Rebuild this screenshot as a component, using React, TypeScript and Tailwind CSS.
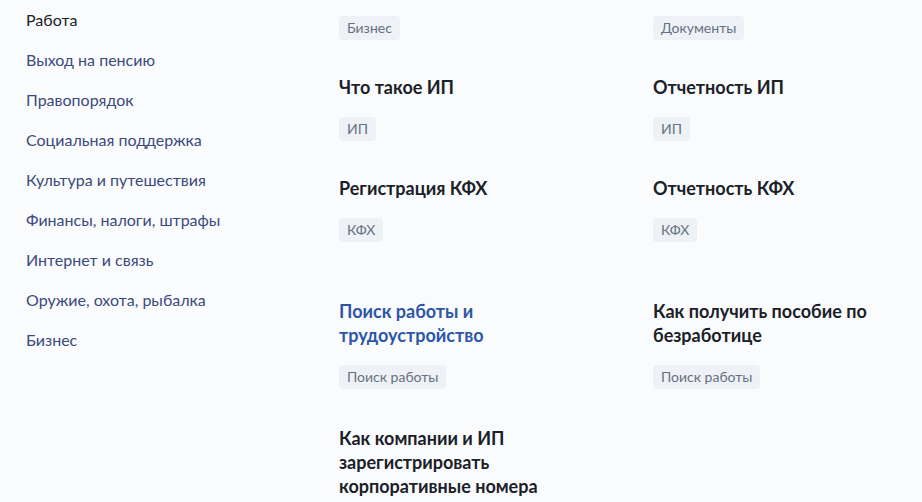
const sidebar = [
  "Работа",
  "Выход на пенсию",
  "Правопорядок",
  "Социальная поддержка",
  "Культура и путешествия",
  "Финансы, налоги, штрафы",
  "Интернет и связь",
  "Оружие, охота, рыбалка",
  "Бизнес",
];

type Card = { title?: string; tag: string; active?: boolean };

function Tag({ label }: { label: string }) {
  return (
    <span className="inline-flex h-6 items-center self-start rounded bg-[#eef1f6] px-2 text-[14px] leading-none text-[#66727f]">
      {label}
    </span>
  );
}

function CardItem({ card }: { card: Card }) {
  return (
    <div className="flex flex-col">
      {card.title && (
        <h3
          className={
            card.active
              ? "mb-[18px] max-w-[250px] text-[18px] font-bold leading-6 text-[#2c56a6]"
              : "mb-[18px] max-w-[250px] text-[18px] font-bold leading-6 text-[#1b2128]"
          }
        >
          {card.title}
        </h3>
      )}
      <Tag label={card.tag} />
    </div>
  );
}

const rows: Card[][] = [
  [{ tag: "Бизнес" }, { tag: "Документы" }],
  [
    { title: "Что такое ИП", tag: "ИП" },
    { title: "Отчетность ИП", tag: "ИП" },
  ],
  [
    { title: "Регистрация КФХ", tag: "КФХ" },
    { title: "Отчетность КФХ", tag: "КФХ" },
  ],
  [
    { title: "Поиск работы и трудоустройство", tag: "Поиск работы", active: true },
    { title: "Как получить пособие по безработице", tag: "Поиск работы" },
  ],
];

export default function App() {
  return (
    <div className="flex h-[502px] w-[922px] overflow-hidden bg-[#fafbfd] font-['Lato','Noto_Sans',sans-serif]">
      {/* Left menu */}
      <aside className="w-[339px] shrink-0 pl-[26px] pt-2">
        <ul className="flex flex-col gap-4">
          {sidebar.map((item, i) => (
            <li
              key={item}
              className={
                i === 0
                  ? "text-[16px] leading-6 text-[#1b2128]"
                  : "text-[16px] leading-6 text-[#3b4a7c]"
              }
            >
              {item}
            </li>
          ))}
        </ul>
      </aside>

      {/* Cards */}
      <main className="flex-1 pt-4">
        <div className="flex flex-col">
          {rows.map((row, ri) => (
            <div
              key={ri}
              className={
                ri === 0
                  ? "grid grid-cols-[314px_1fr]"
                  : ri === 3
                  ? "mt-[57px] grid grid-cols-[314px_1fr]"
                  : "mt-[35px] grid grid-cols-[314px_1fr]"
              }
            >
              {row.map((card) => (
                <div key={card.title ?? card.tag}>
                  <CardItem card={card} />
                </div>
              ))}
            </div>
          ))}
          <div className="mt-[37px] grid grid-cols-[314px_1fr]">
            <h3 className="max-w-[250px] text-[18px] font-bold leading-6 text-[#1b2128]">
              Как компании и ИП зарегистрировать корпоративные номера
            </h3>
          </div>
        </div>
      </main>
    </div>
  );
}
